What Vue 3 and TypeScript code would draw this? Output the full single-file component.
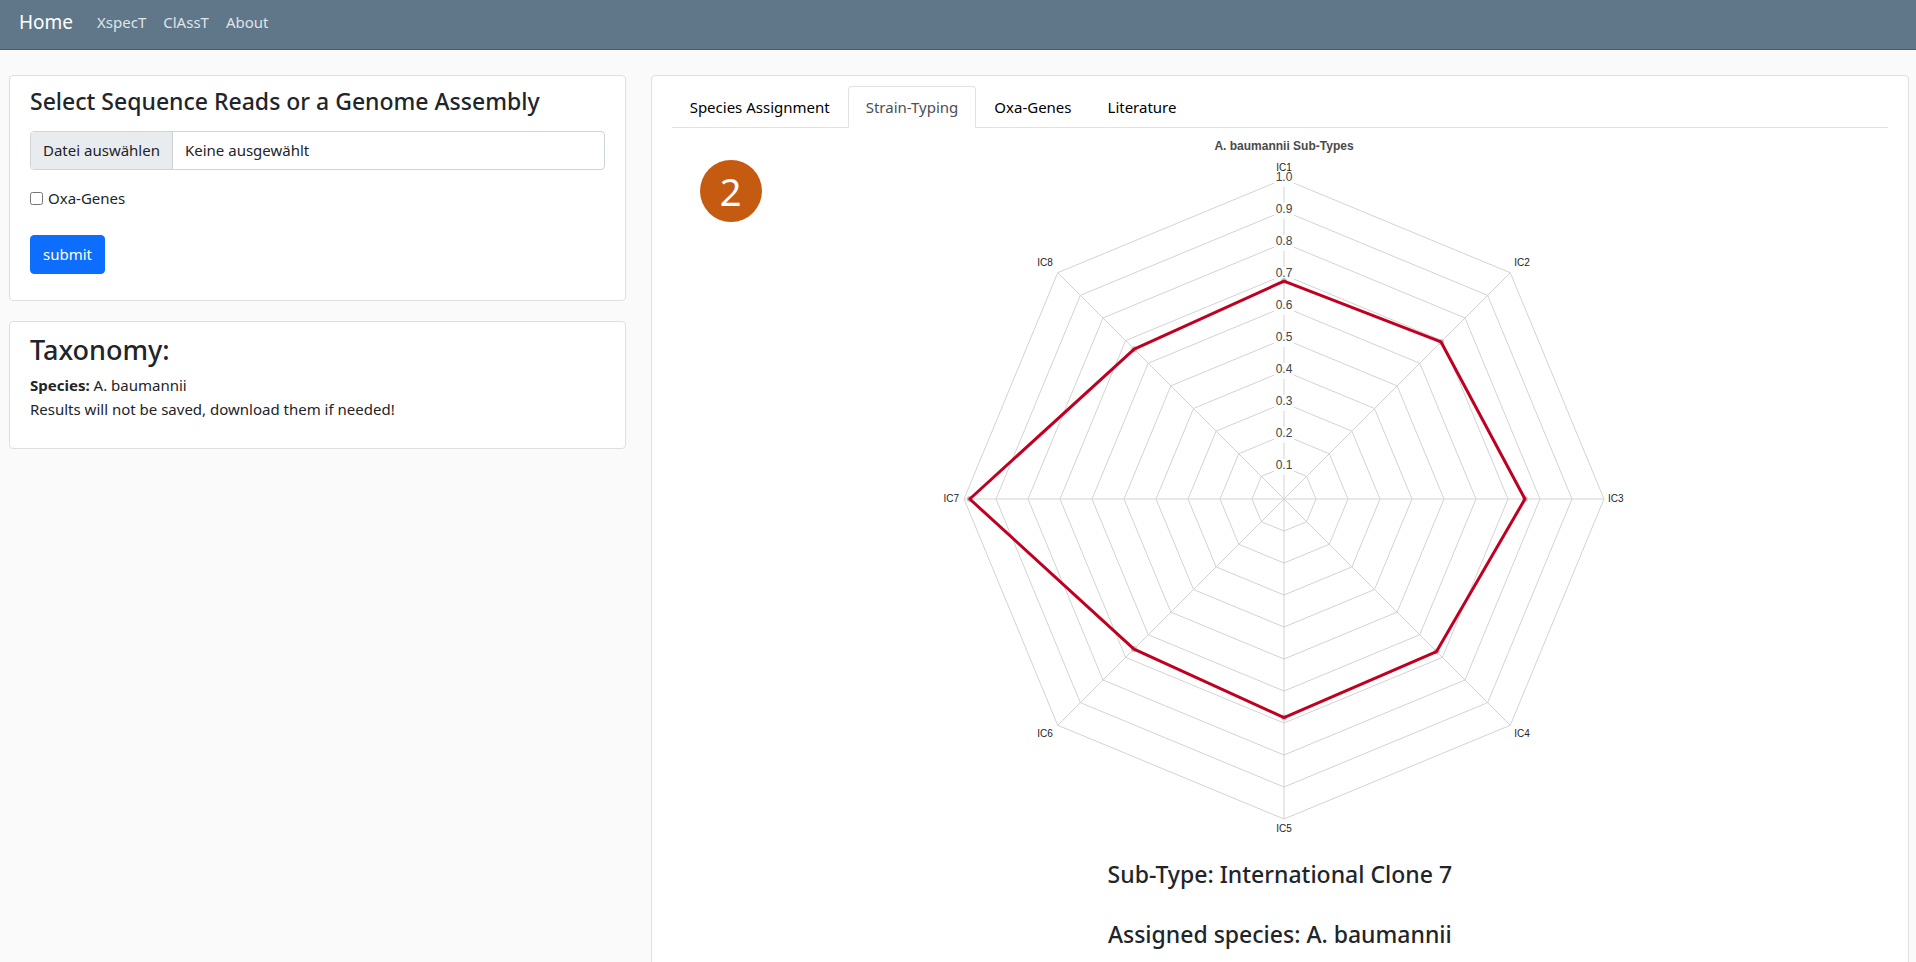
<script setup lang="ts">
import { ref } from 'vue'

interface Score {
  label: string
  value: number
}

const scores: Score[] = [
  { label: 'IC1', value: 0.681 },
  { label: 'IC2', value: 0.694 },
  { label: 'IC3', value: 0.753 },
  { label: 'IC4', value: 0.674 },
  { label: 'IC5', value: 0.683 },
  { label: 'IC6', value: 0.663 },
  { label: 'IC7', value: 0.982 },
  { label: 'IC8', value: 0.662 },
]

const tabs = ['Species Assignment', 'Strain-Typing', 'Oxa-Genes', 'Literature']
const activeTab = ref('Strain-Typing')
const oxaGenes = ref(false)

// Radar geometry, in viewBox units
const cx = 364
const cy = 371
const radius = 320
const levels = Array.from({ length: 10 }, (_, i) => (i + 1) / 10)

function point(index: number, value: number) {
  const angle = (index * 2 * Math.PI) / scores.length
  return {
    x: cx + Math.sin(angle) * radius * value,
    y: cy - Math.cos(angle) * radius * value,
  }
}

function polygon(values: number[]): string {
  return values
    .map((v, i) => {
      const p = point(i, v)
      return `${p.x.toFixed(2)},${p.y.toFixed(2)}`
    })
    .join(' ')
}

const rings = levels.map((l) => polygon(scores.map(() => l)))
const dataShape = polygon(scores.map((s) => s.value))
const axes = scores.map((_, i) => point(i, 1))
const dots = scores.map((s, i) => point(i, s.value))
const ticks = levels.map((l) => ({ text: l.toFixed(1), y: cy - radius * l }))

const labels = scores.map((s, i) => {
  const p = point(i, 1)
  const side = Math.round(p.x - cx)
  const rise = Math.round(p.y - cy)
  const anchor = side === 0 ? 'middle' : side > 0 ? 'start' : 'end'
  const dx = side === 0 ? 0 : side > 0 ? 4 : -5
  let dy = 3
  if (side === 0) dy = rise < 0 ? -8 : 13
  else if (rise < 0) dy = -7
  else if (rise > 0) dy = 12
  return { text: s.label, x: p.x + dx, y: p.y + dy, anchor }
})
</script>

<template>
  <div class="page">
    <nav class="navbar">
      <a class="brand" href="#">Home</a>
      <a class="nav-link" href="#">XspecT</a>
      <a class="nav-link" href="#">ClAssT</a>
      <a class="nav-link" href="#">About</a>
    </nav>

    <main class="layout">
      <div class="sidebar">
        <form class="card form-card" @submit.prevent>
          <h4 class="heading">Select Sequence Reads or a Genome Assembly</h4>
          <label class="file-field">
            <input class="file-input" type="file" />
            <span class="file-button">Datei auswählen</span>
            <span class="file-name">Keine ausgewählt</span>
          </label>
          <label class="check">
            <input v-model="oxaGenes" class="check-box" type="checkbox" />
            <span>Oxa-Genes</span>
          </label>
          <button class="submit" type="submit">submit</button>
        </form>

        <section class="card taxonomy">
          <h3 class="taxonomy-title">Taxonomy:</h3>
          <p class="line"><strong>Species:</strong> A. baumannii</p>
          <p class="line">Results will not be saved, download them if needed!</p>
        </section>
      </div>

      <section class="card results">
        <div class="tabs" role="tablist">
          <button
            v-for="tab in tabs"
            :key="tab"
            class="tab"
            :class="{ active: tab === activeTab }"
            type="button"
            role="tab"
            :aria-selected="tab === activeTab"
            @click="activeTab = tab"
          >
            {{ tab }}
          </button>
        </div>

        <div class="panel" role="tabpanel">
          <span class="badge">2</span>
          <svg class="radar" viewBox="0 0 720 720" width="720" height="720">
            <text class="chart-title" :x="cx" y="22">A. baumannii Sub-Types</text>
            <polygon v-for="(r, i) in rings" :key="'r' + i" class="grid" :points="r" />
            <line
              v-for="(a, i) in axes"
              :key="'a' + i"
              class="grid"
              :x1="cx"
              :y1="cy"
              :x2="a.x"
              :y2="a.y"
            />
            <g v-for="t in ticks" :key="t.text">
              <rect class="tick-back" :x="cx - 10" :y="t.y - 8" width="20" height="16" />
              <text class="tick" :x="cx" :y="t.y + 2">{{ t.text }}</text>
            </g>
            <text
              v-for="l in labels"
              :key="l.text"
              class="point-label"
              :x="l.x"
              :y="l.y"
              :text-anchor="l.anchor"
            >
              {{ l.text }}
            </text>
            <circle v-for="(d, i) in dots" :key="'d' + i" class="dot" :cx="d.x" :cy="d.y" r="3" />
            <polygon class="data" :points="dataShape" />
          </svg>
          <h4 class="result-line">Sub-Type: International Clone 7</h4>
          <h4 class="result-line">Assigned species: A. baumannii</h4>
        </div>
      </section>
    </main>
  </div>
</template>

<style>
body {
  margin: 0;
  background: #fafafa;
}
</style>

<style scoped>
.page {
  box-sizing: border-box;
  min-height: 100vh;
  font-family: 'Noto Sans', 'Open Sans', sans-serif;
  font-size: 15px;
  line-height: 24px;
  color: #212529;
  background: #fafafa;
}

.navbar {
  display: flex;
  align-items: center;
  gap: 17px;
  box-sizing: border-box;
  height: 50px;
  padding: 0 19px 5px;
  background: #60778a;
  border-bottom: 1px solid #3f5f76;
}

.brand {
  margin-right: 7px;
  font-size: 19px;
  color: #fff;
  text-decoration: none;
}

.nav-link {
  color: #dfe4e8;
  text-decoration: none;
}

.layout {
  display: grid;
  grid-template-columns: 617fr 1259fr;
  gap: 25px;
  align-items: start;
  padding: 25px 7px 0 9px;
}

.sidebar {
  display: flex;
  flex-direction: column;
  gap: 20px;
}

.card {
  box-sizing: border-box;
  padding: 10px 20px;
  background: #fff;
  border: 1px solid #dfdfdf;
  border-radius: 4px;
}

.form-card {
  display: flex;
  flex-direction: column;
  align-items: flex-start;
  padding-top: 9px;
  padding-bottom: 26px;
}

.heading {
  margin: 0 0 14px;
  font-size: 23px;
  line-height: 32px;
  font-weight: 500;
}

.file-field {
  position: relative;
  display: flex;
  box-sizing: border-box;
  width: 100%;
  height: 39px;
  overflow: hidden;
  line-height: 37px;
  background: #fff;
  border: 1px solid #ced4da;
  border-radius: 4px;
}

.file-input {
  position: absolute;
  inset: 0;
  width: 100%;
  opacity: 0;
}

.file-button {
  padding: 0 12px;
  background: #e9ecef;
  border-right: 1px solid #ced4da;
}

.file-name {
  padding: 0 12px;
}

.check {
  display: flex;
  align-items: center;
  gap: 5px;
  margin: 16px 0 25px;
}

.check-box {
  width: 13px;
  height: 13px;
  margin: 0;
}

.submit {
  height: 39px;
  padding: 0 12px 2px;
  font: inherit;
  color: #fff;
  background: #0d6efd;
  border: 1px solid #0d6efd;
  border-radius: 4px;
}

.taxonomy {
  padding-bottom: 27px;
}

.taxonomy-title {
  margin: 0 0 5px;
  font-size: 27px;
  line-height: 36px;
  font-weight: 500;
}

.line {
  margin: 0;
}

.results {
  min-height: 910px;
}

.tabs {
  display: flex;
  border-bottom: 1px solid #dee2e6;
}

.tab {
  box-sizing: border-box;
  height: 42px;
  margin-bottom: -1px;
  padding: 0 17px;
  font: inherit;
  color: #000;
  background: transparent;
  border: 1px solid transparent;
  border-radius: 4px 4px 0 0;
}

.tab.active {
  color: #495057;
  background: #fff;
  border-color: #dee2e6 #dee2e6 #fff;
}

.panel {
  position: relative;
  display: flex;
  flex-direction: column;
  align-items: center;
}

.badge {
  position: absolute;
  top: 32px;
  left: 28px;
  width: 62px;
  height: 62px;
  font-size: 38px;
  line-height: 62px;
  text-align: center;
  color: #fff;
  background: #c55a11;
  border-radius: 50%;
}

.radar {
  display: block;
  max-width: 100%;
  font-family: 'Liberation Sans', Arial, sans-serif;
}

.chart-title {
  font-size: 12px;
  font-weight: 700;
  text-anchor: middle;
  fill: #4a4a4a;
}

.grid {
  fill: none;
  stroke: #d3d3d3;
  stroke-width: 1;
}

.tick-back {
  fill: #fff;
  fill-opacity: 0.85;
}

.tick {
  font-size: 12px;
  text-anchor: middle;
  fill: #444;
}

.point-label {
  font-size: 10px;
  fill: #222;
}

.dot {
  fill: #c4c4c4;
}

.data {
  fill: none;
  stroke: #c00020;
  stroke-width: 3;
  stroke-linejoin: round;
}

.result-line {
  margin: 10px 0 18px;
  font-size: 23px;
  line-height: 32px;
  font-weight: 500;
}
</style>
